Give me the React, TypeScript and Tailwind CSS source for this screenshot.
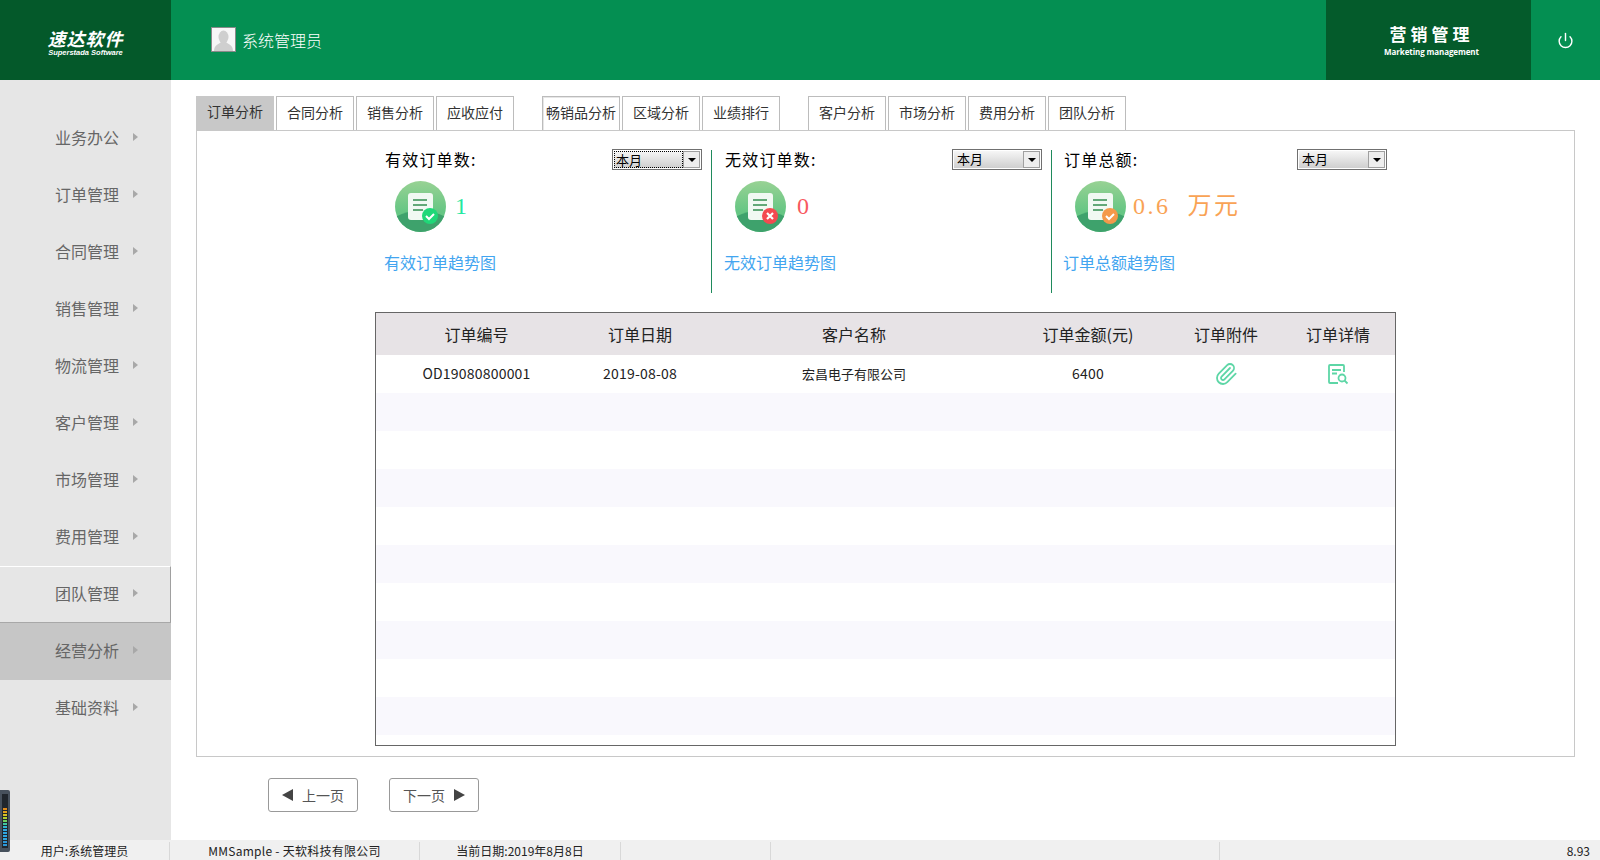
import { Paperclip, Power } from "lucide-react";

const cjk = { fontFamily: '"Noto Sans CJK SC", "Noto Sans", sans-serif' };

const menuItems = ["业务办公", "订单管理", "合同管理", "销售管理", "物流管理", "客户管理", "市场管理", "费用管理", "团队管理", "经营分析", "基础资料"];

const tabGroups = [
    ["订单分析", "合同分析", "销售分析", "应收应付"],
    ["畅销品分析", "区域分析", "业绩排行"],
    ["客户分析", "市场分析", "费用分析", "团队分析"],
];

const meterColors = ["#e08a1a", "#e0a01a", "#d8c020", "#b0d030", "#70d060", "#40c8a0", "#30b8d0", "#30a8e0", "#30a8e0", "#30a8e0", "#30a8e0", "#2c98d8", "#2c98d8"];

const StatIcon = ({ badge, kind }: { badge: string; kind: "check" | "cross" }) => (
    <svg width="51" height="51" viewBox="0 0 51 51" className="shrink-0">
        <defs>
            <linearGradient id={`g-${badge}`} x1="0" y1="0" x2="0" y2="1">
                <stop offset="0" stopColor="#98d294" />
                <stop offset="0.6" stopColor="#66c684" />
            </linearGradient>
            <clipPath id={`c-${badge}`}>
                <circle cx="25.5" cy="25.5" r="25.5" />
            </clipPath>
        </defs>
        <circle cx="25.5" cy="25.5" r="25.5" fill={`url(#g-${badge})`} />
        <path d="M0 36 Q25 23 51 36 V51 H0 Z" fill="#3ea26c" clipPath={`url(#c-${badge})`} />
        <rect x="13" y="12" width="25" height="27" rx="3" fill="#f1f9f3" />
        <rect x="18" y="18" width="14" height="2" fill="#62a878" />
        <rect x="18" y="23" width="14" height="2" fill="#62a878" />
        <rect x="18" y="28" width="10" height="2" fill="#62a878" />
        <circle cx="35" cy="35" r="8" fill={badge} />
        {kind === "check" ? (
            <path d="M31 35 l3 3 l5 -5" fill="none" stroke="#fff" strokeWidth="2" />
        ) : (
            <path d="M32 32 l6 6 M38 32 l-6 6" fill="none" stroke="#fff" strokeWidth="2.2" />
        )}
    </svg>
);

const SelectBox = ({ focused }: { focused?: boolean }) => (
    <div className="flex h-[21px] w-[90px] shrink-0 border border-[#707070] bg-white p-px">
        <div className="flex flex-1 bg-gradient-to-b from-[#f6f6f6] to-[#cfcfcf]">
            <div className={`flex-1 text-[13px] leading-[15px] text-black ${focused ? "border border-dotted border-black pl-px" : "pl-[3px]"}`}>
                本月
            </div>
            <div className="flex w-[17px] items-center justify-center border border-[#a0a0a0] bg-[#eeeeee]">
                <div className="h-0 w-0 border-x-[4px] border-t-[4px] border-x-transparent border-t-black" />
            </div>
        </div>
    </div>
);

const StatColumn = ({ label, value, valueClass, link, badge, kind, focused, className, headClass, iconClass }: {
    label: string;
    value: string;
    valueClass: string;
    link: string;
    badge: string;
    kind: "check" | "cross";
    focused?: boolean;
    className: string;
    headClass: string;
    iconClass: string;
}) => (
    <div className={`h-[143px] shrink-0 ${className}`}>
        <div className={`-mt-px flex items-center justify-between ${headClass}`}>
            <span className="-ml-px text-[16px] leading-[21px] tracking-[1.2px] text-black">{label}</span>
            <SelectBox focused={focused} />
        </div>
        <div className={`mt-[11px] flex items-center ${iconClass}`}>
            <StatIcon badge={badge} kind={kind} />
            <span className={`whitespace-pre text-[24px] leading-[51px] tracking-[2.5px] ${valueClass}`} style={{ fontFamily: '"Liberation Serif", "Noto Sans CJK SC", serif' }}>
                {value}
            </span>
        </div>
        <div className="-ml-[2px] mt-[19px] text-[16px] leading-[22px] text-[#42a5f0]">{link}</div>
    </div>
);

const rows = Array.from({ length: 9 }, (_, i) => i);

export default function App() {
    return (
        <div className="relative flex h-[860px] w-[1600px] flex-col overflow-hidden bg-white" style={cjk}>
            <header className="flex h-20 shrink-0 bg-[#048f52]">
                <div className="flex w-[171px] shrink-0 flex-col items-center justify-center bg-[#04592a] pt-[3px] text-white">
                    <div className="text-[18px] font-bold italic leading-[22px] tracking-[1px]">速达软件</div>
                    <div className="text-[7.5px] font-bold italic leading-[8px]" style={{ fontFamily: '"Liberation Sans", sans-serif' }}>Superstada Software</div>
                </div>
                <div className="flex flex-1 items-center pb-px pl-10">
                    <div className="flex h-[25px] w-[25px] items-end justify-center overflow-hidden border border-[#8a8a8a] bg-[#f7f7f7]">
                        <svg width="19" height="21" viewBox="0 0 19 21">
                            <ellipse cx="9.5" cy="7" rx="5" ry="6.5" fill="#cfcfcf" />
                            <path d="M0 21 C0 15 5 14 7 12 H12 C14 14 19 15 19 21 Z" fill="#cfcfcf" />
                        </svg>
                    </div>
                    <span className="ml-[6px] text-[16px] font-light text-white">系统管理员</span>
                </div>
                <div className="flex w-[205px] shrink-0 flex-col items-center justify-center bg-[#045b2b] pl-[6px] text-white">
                    <div className="text-[17px] font-bold leading-[22px] tracking-[4px]">营销管理</div>
                    <div className="mt-[2px] text-[8px] font-bold leading-[10px] tracking-[-0.1px]" style={{ fontFamily: '"Open Sans", sans-serif' }}>Marketing management</div>
                </div>
                <div className="flex w-[69px] shrink-0 items-center justify-center">
                    <Power className="h-[17px] w-[17px] text-white" strokeWidth={2} />
                </div>
            </header>

            <div className="flex min-h-0 flex-1">
                <aside className="w-[171px] shrink-0 bg-[#e6e6e6] pt-[30px]">
                    {menuItems.map((item) => (
                        <div
                            key={item}
                            className={`flex h-[57px] items-center pb-[3px] pl-[55px] text-[16px] text-[#666666] ${item === "团队管理" ? "border-y border-r border-b-[#a8a8a8] border-r-[#a0a0a0] border-t-white" : ""} ${item === "经营分析" ? "bg-[#c6c6c6]" : ""}`}
                        >
                            <span className="w-[78px]">{item}</span>
                            <span className="h-0 w-0 border-y-[4px] border-l-[5px] border-y-transparent border-l-[#a8a8a8]" />
                        </div>
                    ))}
                </aside>

                <main className="flex-1 pl-[25px] pr-[25px] pt-4">
                    <nav className="flex">
                        {tabGroups.map((group, g) => (
                            <div key={g} className="mr-[28px] flex gap-[2px]">
                                {group.map((tab) => (
                                    <div
                                        key={tab}
                                        className={`flex h-[34px] w-[78px] items-center justify-center whitespace-nowrap pb-[3px] text-[14px] text-[#333333] ${tab === "订单分析" ? "bg-[#c8c8c8]" : "border-x border-t border-[#bcbcbc] bg-white"} ${tab === "畅销品分析" ? "shadow-[inset_1px_1px_0_#e6e6e6]" : ""}`}
                                    >
                                        {tab}
                                    </div>
                                ))}
                            </div>
                        ))}
                    </nav>

                    <section className="h-[627px] border border-[#c8c8c8] pt-[19px]">
                        <div className="flex pl-[189px]">
                            <StatColumn
                                label="有效订单数:"
                                value="1"
                                valueClass="ml-[9px] text-[#22e8a0]"
                                link="有效订单趋势图"
                                badge="#1fd878"
                                kind="check"
                                focused
                                className="w-[325px]"
                                headClass="w-[316px]"
                                iconClass="pl-[9px]"
                            />
                            <StatColumn
                                label="无效订单数:"
                                value="0"
                                valueClass="ml-[11px] text-[#f8595f]"
                                link="无效订单趋势图"
                                badge="#f44a50"
                                kind="cross"
                                className="w-[340px] border-l border-[#1f8a5c] pl-[14px]"
                                headClass="w-[316px]"
                                iconClass="pl-[9px]"
                            />
                            <StatColumn
                                label="订单总额:"
                                value="0.6  万元"
                                valueClass="ml-[7px] text-[#f9a355]"
                                link="订单总额趋势图"
                                badge="#f4994a"
                                kind="check"
                                className="w-[337px] border-l border-[#1f8a5c] pl-[13px]"
                                headClass="w-[322px]"
                                iconClass="pl-[10px]"
                            />
                        </div>

                        <div className="-mt-[3px] ml-[178px] h-[434px] w-[1021px] border border-[#666666] first:mt-0" style={{ marginTop: 19 }}>
                            <div className="grid h-[42px] grid-cols-[201px_126px_302px_166px_110px_114px] items-center bg-[#e7e3e6] text-center text-[16px] text-[#222222]">
                                <span>订单编号</span>
                                <span>订单日期</span>
                                <span>客户名称</span>
                                <span>订单金额(元)</span>
                                <span>订单附件</span>
                                <span>订单详情</span>
                            </div>
                            <div className="grid h-[38px] grid-cols-[201px_126px_302px_166px_110px_114px] items-center pb-px text-center text-[14px] tracking-[0.2px] text-[#222222]">
                                <span>OD19080800001</span>
                                <span>2019-08-08</span>
                                <span className="text-[13px] tracking-normal">宏昌电子有限公司</span>
                                <span>6400</span>
                                <span className="flex justify-center">
                                    <Paperclip className="h-[24px] w-[24px] text-[#5dd6a6]" strokeWidth={1.8} />
                                </span>
                                <span className="flex justify-center">
                                    <svg width="22" height="22" viewBox="0 0 22 22" fill="none" stroke="#5dd6a6" strokeWidth="1.8">
                                        <path d="M17 9 V3 a1 1 0 0 0 -1 -1 H3 a1 1 0 0 0 -1 1 V19 a1 1 0 0 0 1 1 H11" />
                                        <path d="M5 7 H14 M5 10.5 H10" />
                                        <circle cx="15" cy="15" r="3.5" />
                                        <path d="M17.5 17.5 L20.5 20.5" />
                                    </svg>
                                </span>
                            </div>
                            {rows.map((r) => (
                                <div key={r} className={`h-[38px] ${r % 2 === 0 ? "bg-[#f9f8fd]" : "bg-white"}`} />
                            ))}
                        </div>
                    </section>

                    <div className="ml-[72px] mt-[21px] flex gap-[31px]">
                        <button className="flex h-[34px] w-[90px] items-center justify-center gap-[9px] rounded-[3px] border border-[#999999] text-[14px] text-[#555555]">
                            <span className="h-0 w-0 border-y-[6px] border-r-[11px] border-y-transparent border-r-[#444444]" />
                            上一页
                        </button>
                        <button className="flex h-[34px] w-[90px] items-center justify-center gap-[9px] rounded-[3px] border border-[#999999] text-[14px] text-[#555555]">
                            下一页
                            <span className="h-0 w-0 border-y-[6px] border-l-[11px] border-y-transparent border-l-[#444444]" />
                        </button>
                    </div>
                </main>
            </div>

            <footer className="flex h-5 shrink-0 items-stretch bg-[#f0f0f0] pt-[2px] text-[12px] leading-[18px] text-[#222222]">
                <div className="w-[169px] text-center">用户:系统管理员</div>
                <div className="w-[250px] border-l border-[#d8d8d8] text-center tracking-[0.25px]">MMSample - 天软科技有限公司</div>
                <div className="w-[201px] border-l border-[#d8d8d8] text-center">当前日期:2019年8月8日</div>
                <div className="w-[150px] border-l border-[#d8d8d8]" />
                <div className="w-[449px] border-l border-[#d8d8d8]" />
                <div className="flex-1 border-l border-[#d8d8d8] pr-[10px] text-right">8.93</div>
            </footer>

            {/* little level meter stuck over the corner */}
            <div className="absolute bottom-[8px] left-0 h-[62px] w-[10px] rounded-r-[2px] bg-[#47515c] px-[2px] py-[4px]">
                <div className="flex h-full flex-col justify-end gap-px bg-[#20262c] px-px pb-[2px]">
                    {meterColors.map((c, i) => (
                        <div key={i} className="h-[2px]" style={{ backgroundColor: c }} />
                    ))}
                </div>
            </div>
        </div>
    );
}
